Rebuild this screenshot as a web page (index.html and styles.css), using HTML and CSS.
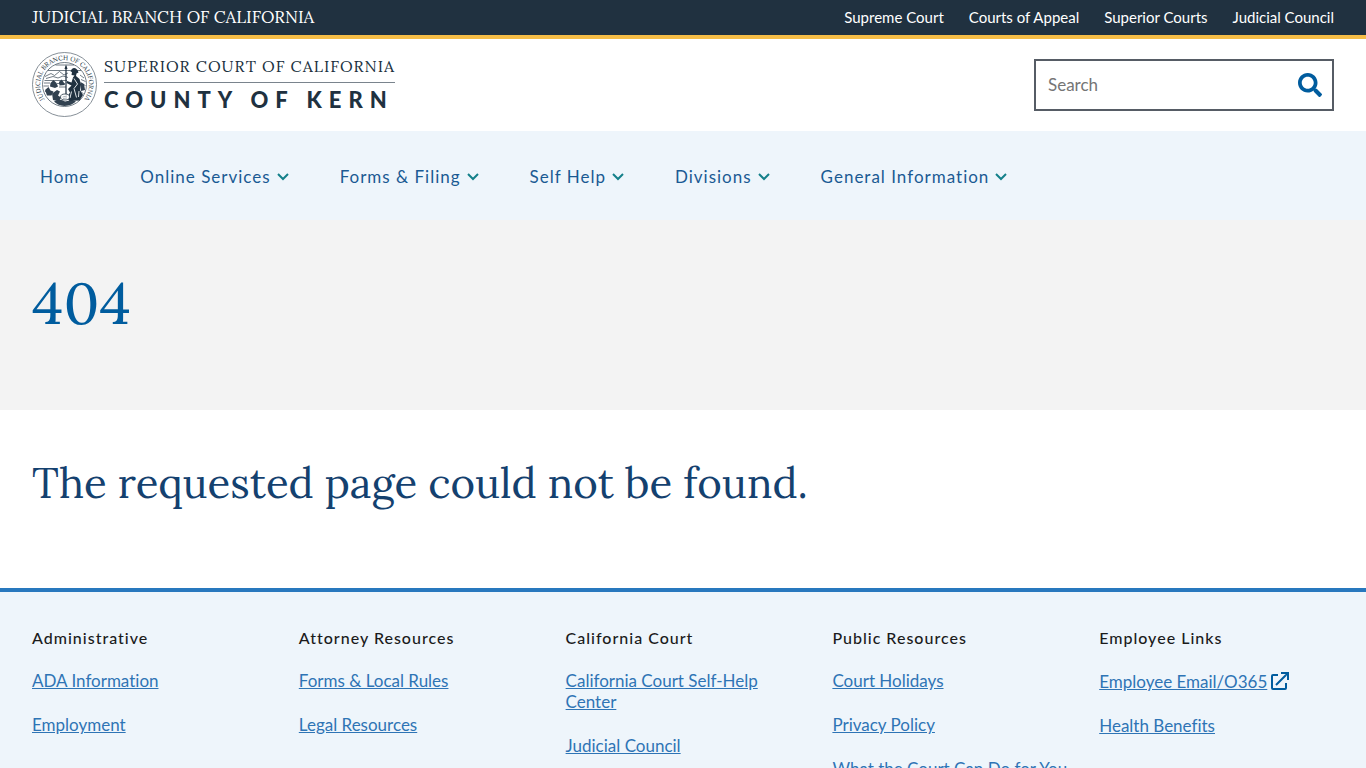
FILE: index.html
```
<!DOCTYPE html>
<html lang="en">
<head>
  <meta charset="UTF-8">
  <title>404 | Superior Court of California | County of Kern</title>
  <meta name="viewport" content="width=device-width, initial-scale=1.0">
  <link rel="stylesheet" href="styles.css">
</head>
<body>
  <div class="branch-bar">
    <a class="branch-name" href="#">JUDICIAL BRANCH OF CALIFORNIA</a>
    <nav class="branch-links" aria-label="Judicial branch">
      <a href="#">Supreme Court</a>
      <a href="#">Courts of Appeal</a>
      <a href="#">Superior Courts</a>
      <a href="#">Judicial Council</a>
    </nav>
  </div>

  <header class="site-header">
    <a class="logo" href="#">
      <svg class="seal" viewBox="0 0 130 130" aria-hidden="true">
        <defs>
          <path id="seal-arc" d="M27 96 A 49 49 0 1 1 103 96"/>
        </defs>
        <circle cx="65" cy="65" r="64" fill="#fff" stroke="#5f6b76" stroke-width="1.5"/>
        <circle cx="65" cy="65" r="44" fill="none" stroke="#43515e" stroke-width="1.5"/>
        <text class="seal-text"><textPath href="#seal-arc" startOffset="50%" text-anchor="middle">JUDICIAL BRANCH OF CALIFORNIA</textPath></text>
        <!-- hills and bay -->
        <g fill="none" stroke="#43515e" stroke-width="1.5">
          <path d="M26 49 L38 43 L45 47 L55 39 L64 46 L72 42 M28 53 L42 49 L52 52 L62 48 L72 51"/>
          <path d="M32 37 H98 M25 57 H70 M24 62 H36 M50 63 H66 M23 68 H34 M54 70 H68 M26 79 H40 M96 46 L104 52 M98 55 L107 59 M98 63 L107 67 M98 71 L106 75 M98 79 L103 84"/>
          <path d="M47 26 H84"/>
        </g>
        <!-- ships, miner and grain -->
        <g fill="#314150">
          <path d="M37 62 L43 56 L49 62 L52 69 L46 72 L36 69 Z"/>
          <path d="M54 60 L59 55 L63 60 L66 66 L55 67 Z"/>
          <path d="M26 76 L33 70 L37 77 L43 79 L39 87 L30 87 Z"/>
          <path d="M40 83 L50 76 L56 79 L52 87 L58 91 L54 99 L42 96 Z"/>
          <path d="M97 60 L104 64 L106 76 L98 78 Z"/>
          <path d="M44 99 Q56 92 66 99 L80 96 L88 99 Q79 107 65 108 Q52 107 44 99 Z"/>
        </g>
        <!-- Minerva with spear and shield -->
        <path d="M68 29 V90" stroke="#203140" stroke-width="2.5"/>
        <path d="M65 34 L68 25 L71 34 Z" fill="#203140"/>
        <path d="M79 35 Q85 29 91 36 L93 41 L89 43 L88 48 L95 54 L98 65 L96 76 L102 86 L95 97 L75 98 L69 91 L76 81 L72 74 L79 67 L69 62 L70 58 L79 61 L82 51 L85 47 L79 46 L80 40 L77 39 Z" fill="#203140"/>
        <path d="M84 53 L91 64 L84 73 L89 91 M79 79 L76 92 M94 78 L93 90" fill="none" stroke="#dce2e6" stroke-width="2"/>
        <ellipse cx="66" cy="90" rx="9" ry="6" fill="#fff" stroke="#203140" stroke-width="1.5"/>
        <path d="M61 90 L70 88 M62 93 L70 92" stroke="#5f6b76"/>
      </svg>
      <span class="logo-text">
        <span class="logo-court">SUPERIOR COURT OF CALIFORNIA</span>
        <span class="logo-county">COUNTY OF KERN</span>
      </span>
    </a>

    <form class="search" role="search">
      <input type="search" placeholder="Search" aria-label="Search">
      <button type="submit" aria-label="Submit search">
        <svg viewBox="0 0 512 512" width="24" height="24" fill="currentColor" aria-hidden="true">
          <path d="M505 442.7L405.300 343c-4.500-4.500-10.600-7-17-7H372c27.600-35.300 44-79.700 44-128C416 93.100 322.900 0 208 0S0 93.100 0 208s93.100 208 208 208c48.300 0 92.700-16.400 128-44v16.300c0 6.400 2.500 12.500 7 17l99.700 99.700c9.400 9.400 24.600 9.400 33.900 0l28.300-28.300c9.400-9.400 9.400-24.600.1-34zM208 336c-70.700 0-128-57.200-128-128 0-70.700 57.200-128 128-128 70.700 0 128 57.200 128 128 0 70.700-57.200 128-128 128z"/>
        </svg>
      </button>
    </form>
  </header>

  <nav class="main-nav" aria-label="Main">
    <a href="#">Home</a>
    <button type="button">Online Services <svg class="chevron" viewBox="0 0 12 8"><path d="M1 1 L6 6 L11 1"/></svg></button>
    <button type="button">Forms &amp; Filing <svg class="chevron" viewBox="0 0 12 8"><path d="M1 1 L6 6 L11 1"/></svg></button>
    <button type="button">Self Help <svg class="chevron" viewBox="0 0 12 8"><path d="M1 1 L6 6 L11 1"/></svg></button>
    <button type="button">Divisions <svg class="chevron" viewBox="0 0 12 8"><path d="M1 1 L6 6 L11 1"/></svg></button>
    <button type="button">General Information <svg class="chevron" viewBox="0 0 12 8"><path d="M1 1 L6 6 L11 1"/></svg></button>
  </nav>

  <main>
    <div class="hero">
      <h1>404</h1>
    </div>
    <div class="message">
      <h2>The requested page could not be found.</h2>
    </div>
  </main>

  <footer class="site-footer">
    <section>
      <h3>Administrative</h3>
      <ul>
        <li><a href="#">ADA Information</a></li>
        <li><a href="#">Employment</a></li>
      </ul>
    </section>
    <section>
      <h3>Attorney Resources</h3>
      <ul>
        <li><a href="#">Forms &amp; Local Rules</a></li>
        <li><a href="#">Legal Resources</a></li>
      </ul>
    </section>
    <section>
      <h3>California Court</h3>
      <ul>
        <li><a href="#">California Court Self-Help Center</a></li>
        <li><a href="#">Judicial Council</a></li>
      </ul>
    </section>
    <section>
      <h3>Public Resources</h3>
      <ul>
        <li><a href="#">Court Holidays</a></li>
        <li><a href="#">Privacy Policy</a></li>
        <li><a href="#">What the Court Can Do for You</a></li>
      </ul>
    </section>
    <section>
      <h3>Employee Links</h3>
      <ul>
        <li class="external">
          <a href="#">Employee Email/O365</a>
          <svg viewBox="0 0 18 18" width="18" height="18" aria-hidden="true">
            <path d="M7 3 H2 Q1 3 1 4 V16 Q1 17 2 17 H14 Q15 17 15 16 V11 M5 13 L15 3" fill="none" stroke="#005c9e" stroke-width="2"/>
            <path d="M10 0 H18 V8 H16 V4 L14 2 H10 Z" fill="#005c9e"/>
          </svg>
        </li>
        <li><a href="#">Health Benefits</a></li>
      </ul>
    </section>
  </footer>
</body>
</html>
```
FILE: styles.css
```
* {
  box-sizing: border-box;
}
body {
  margin: 0;
  font-family: Lato, sans-serif;
  font-size: 17px;
  font-variant-ligatures: none;
  color: #1b1b1b;
  background: #fff;
}
a {
  color: inherit;
  text-decoration: none;
}
h1, h2, .branch-name, .logo-court {
  font-family: Lora, "Liberation Serif", serif;
  font-weight: 400;
}
.branch-bar {
  display: flex;
  justify-content: space-between;
  align-items: center;
  padding: 0 32px;
  line-height: 35px;
  background: #203140;
  color: #fff;
  border-bottom: 4px solid #f5bd47;
}
.branch-name {
  font-size: 17px;
}
.branch-links {
  display: flex;
  gap: 25px;
  font-size: 15px;
}
.site-header {
  display: flex;
  justify-content: space-between;
  align-items: center;
  padding: 13px 32px 14px;
}
.logo {
  display: flex;
  align-items: center;
  gap: 7px;
  color: #203140;
}
.seal {
  width: 65px;
  height: 65px;
}
.seal-text {
  font-family: Lora, "Liberation Serif", serif;
  font-size: 13px;
  fill: #203140;
}
.logo-text {
  display: flex;
  flex-direction: column;
}
.logo-court {
  font-size: 16px;
  line-height: 26px;
  letter-spacing: 1px;
  padding-bottom: 3px;
  border-bottom: 1px solid #7a848d;
}
.logo-county {
  font-size: 22px;
  font-weight: 900;
  line-height: 34px;
  letter-spacing: 7px;
  margin-right: -7px;
}
.search {
  display: flex;
  width: 300px;
  height: 52px;
  border: 2px solid #565c65;
}
.search input {
  flex: 1;
  min-width: 0;
  padding: 0 12px 1px;
  border: 0;
  background: none;
  font: inherit;
}
.search input::placeholder {
  color: #757575;
}
.search button {
  display: flex;
  align-items: center;
  padding: 0 10px;
  border: 0;
  background: none;
  color: #005c9e;
}
.main-nav {
  display: flex;
  gap: 51px;
  padding: 34px 40px 31px;
  background: #eef5fb;
}
.main-nav a, .main-nav button {
  display: flex;
  align-items: center;
  gap: 6px;
  padding: 0;
  border: 0;
  background: none;
  font: inherit;
  line-height: 24px;
  letter-spacing: 1px;
  color: #1a5a93;
}
.chevron {
  width: 12px;
  height: 8px;
  fill: none;
  stroke: #14808a;
  stroke-width: 2;
}
.hero {
  padding: 47px 32px 71px;
  background: #f3f3f3;
}
.hero h1 {
  margin: 0;
  font-size: 58px;
  line-height: 72px;
  color: #005c9e;
}
.message {
  padding: 47px 32px 79px;
}
.message h2 {
  margin: 0;
  font-size: 42px;
  line-height: 52px;
  color: #14416f;
}
.site-footer {
  display: grid;
  grid-template-columns: repeat(5, 1fr);
  gap: 32px;
  padding: 34px 32px;
  background: #eef5fb;
  border-top: 4px solid #2878be;
}
.site-footer h3 {
  margin: 0 0 20px;
  font-size: 16px;
  font-weight: 500;
  line-height: 24px;
  letter-spacing: 1px;
}
.site-footer ul {
  display: flex;
  flex-direction: column;
  gap: 23px;
  margin: 0;
  padding: 0;
  list-style: none;
  line-height: 21px;
}
.site-footer a {
  color: #2e74b5;
  text-decoration: underline;
}
.external {
  display: flex;
  align-items: center;
  gap: 4px;
  min-height: 22px;
}
```
